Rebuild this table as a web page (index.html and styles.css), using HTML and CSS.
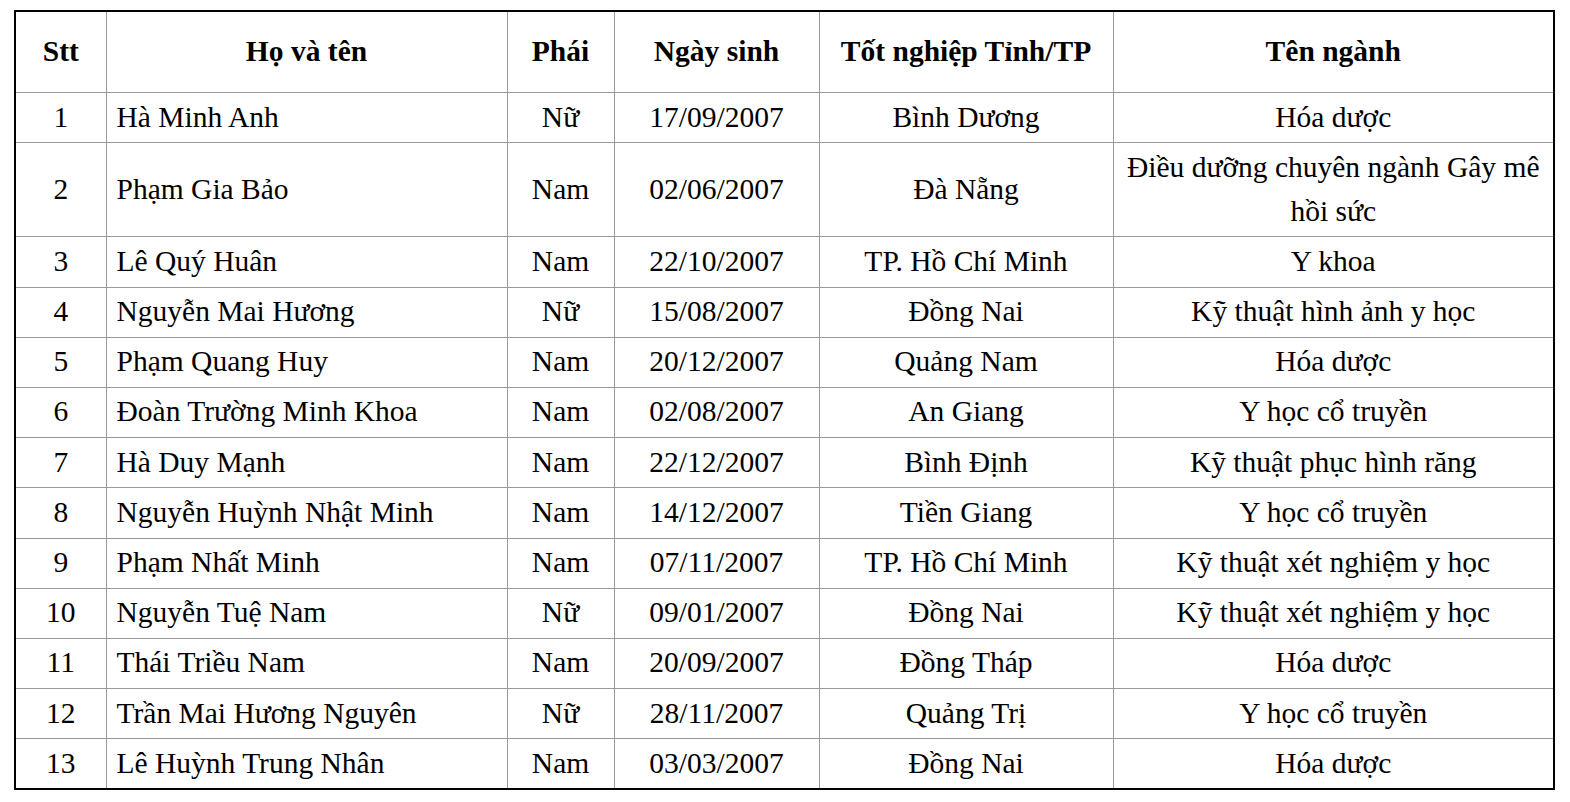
FILE: index.html
```html
<!DOCTYPE html>
<html lang="vi">
<head>
<meta charset="utf-8">
<link rel="stylesheet" href="styles.css">
</head>
<body>
<table class="list">
  <colgroup>
    <col class="c-stt">
    <col class="c-name">
    <col class="c-sex">
    <col class="c-dob">
    <col class="c-prov">
    <col class="c-major">
  </colgroup>
  <thead>
    <tr>
      <th>Stt</th>
      <th>Họ và tên</th>
      <th>Phái</th>
      <th>Ngày sinh</th>
      <th>Tốt nghiệp Tỉnh/TP</th>
      <th>Tên ngành</th>
    </tr>
  </thead>
  <tbody>
    <tr><td>1</td><td class="name">Hà Minh Anh</td><td>Nữ</td><td>17/09/2007</td><td>Bình Dương</td><td>Hóa dược</td></tr>
    <tr><td>2</td><td class="name">Phạm Gia Bảo</td><td>Nam</td><td>02/06/2007</td><td>Đà Nẵng</td><td>Điều dưỡng chuyên ngành Gây mê hồi sức</td></tr>
    <tr><td>3</td><td class="name">Lê Quý Huân</td><td>Nam</td><td>22/10/2007</td><td>TP. Hồ Chí Minh</td><td>Y khoa</td></tr>
    <tr><td>4</td><td class="name">Nguyễn Mai Hương</td><td>Nữ</td><td>15/08/2007</td><td>Đồng Nai</td><td>Kỹ thuật hình ảnh y học</td></tr>
    <tr><td>5</td><td class="name">Phạm Quang Huy</td><td>Nam</td><td>20/12/2007</td><td>Quảng Nam</td><td>Hóa dược</td></tr>
    <tr><td>6</td><td class="name">Đoàn Trường Minh Khoa</td><td>Nam</td><td>02/08/2007</td><td>An Giang</td><td>Y học cổ truyền</td></tr>
    <tr><td>7</td><td class="name">Hà Duy Mạnh</td><td>Nam</td><td>22/12/2007</td><td>Bình Định</td><td>Kỹ thuật phục hình răng</td></tr>
    <tr><td>8</td><td class="name">Nguyễn Huỳnh Nhật Minh</td><td>Nam</td><td>14/12/2007</td><td>Tiền Giang</td><td>Y học cổ truyền</td></tr>
    <tr><td>9</td><td class="name">Phạm Nhất Minh</td><td>Nam</td><td>07/11/2007</td><td>TP. Hồ Chí Minh</td><td>Kỹ thuật xét nghiệm y học</td></tr>
    <tr><td>10</td><td class="name">Nguyễn Tuệ Nam</td><td>Nữ</td><td>09/01/2007</td><td>Đồng Nai</td><td>Kỹ thuật xét nghiệm y học</td></tr>
    <tr><td>11</td><td class="name">Thái Triều Nam</td><td>Nam</td><td>20/09/2007</td><td>Đồng Tháp</td><td>Hóa dược</td></tr>
    <tr><td>12</td><td class="name">Trần Mai Hương Nguyên</td><td>Nữ</td><td>28/11/2007</td><td>Quảng Trị</td><td>Y học cổ truyền</td></tr>
    <tr><td>13</td><td class="name">Lê Huỳnh Trung Nhân</td><td>Nam</td><td>03/03/2007</td><td>Đồng Nai</td><td>Hóa dược</td></tr>
  </tbody>
</table>
</body>
</html>
```
FILE: styles.css
```css
html, body {
  margin: 0;
  padding: 0;
  background: #fff;
}
body {
  padding: 10px 0 0 14px;
  font-family: "Liberation Serif", "Times New Roman", serif;
  font-size: 29.5px;
  color: #000;
}
.list {
  border-collapse: collapse;
  table-layout: fixed;
  width: 1539px;
  border: 2px solid #000;
}
.c-stt { width: 91px; }
.c-name { width: 401px; }
.c-sex { width: 107px; }
.c-dob { width: 205px; }
.c-prov { width: 294px; }
.c-major { width: 441px; }
.list th,
.list td {
  border: 1px solid #999;
  text-align: center;
  vertical-align: middle;
  padding: 1.5px 10px 3.7px;
  line-height: 44px;
}
.list th {
  font-weight: bold;
  height: 78px;
  padding-top: 0;
  padding-bottom: 2px;
}
.list td.name {
  text-align: left;
}
```
